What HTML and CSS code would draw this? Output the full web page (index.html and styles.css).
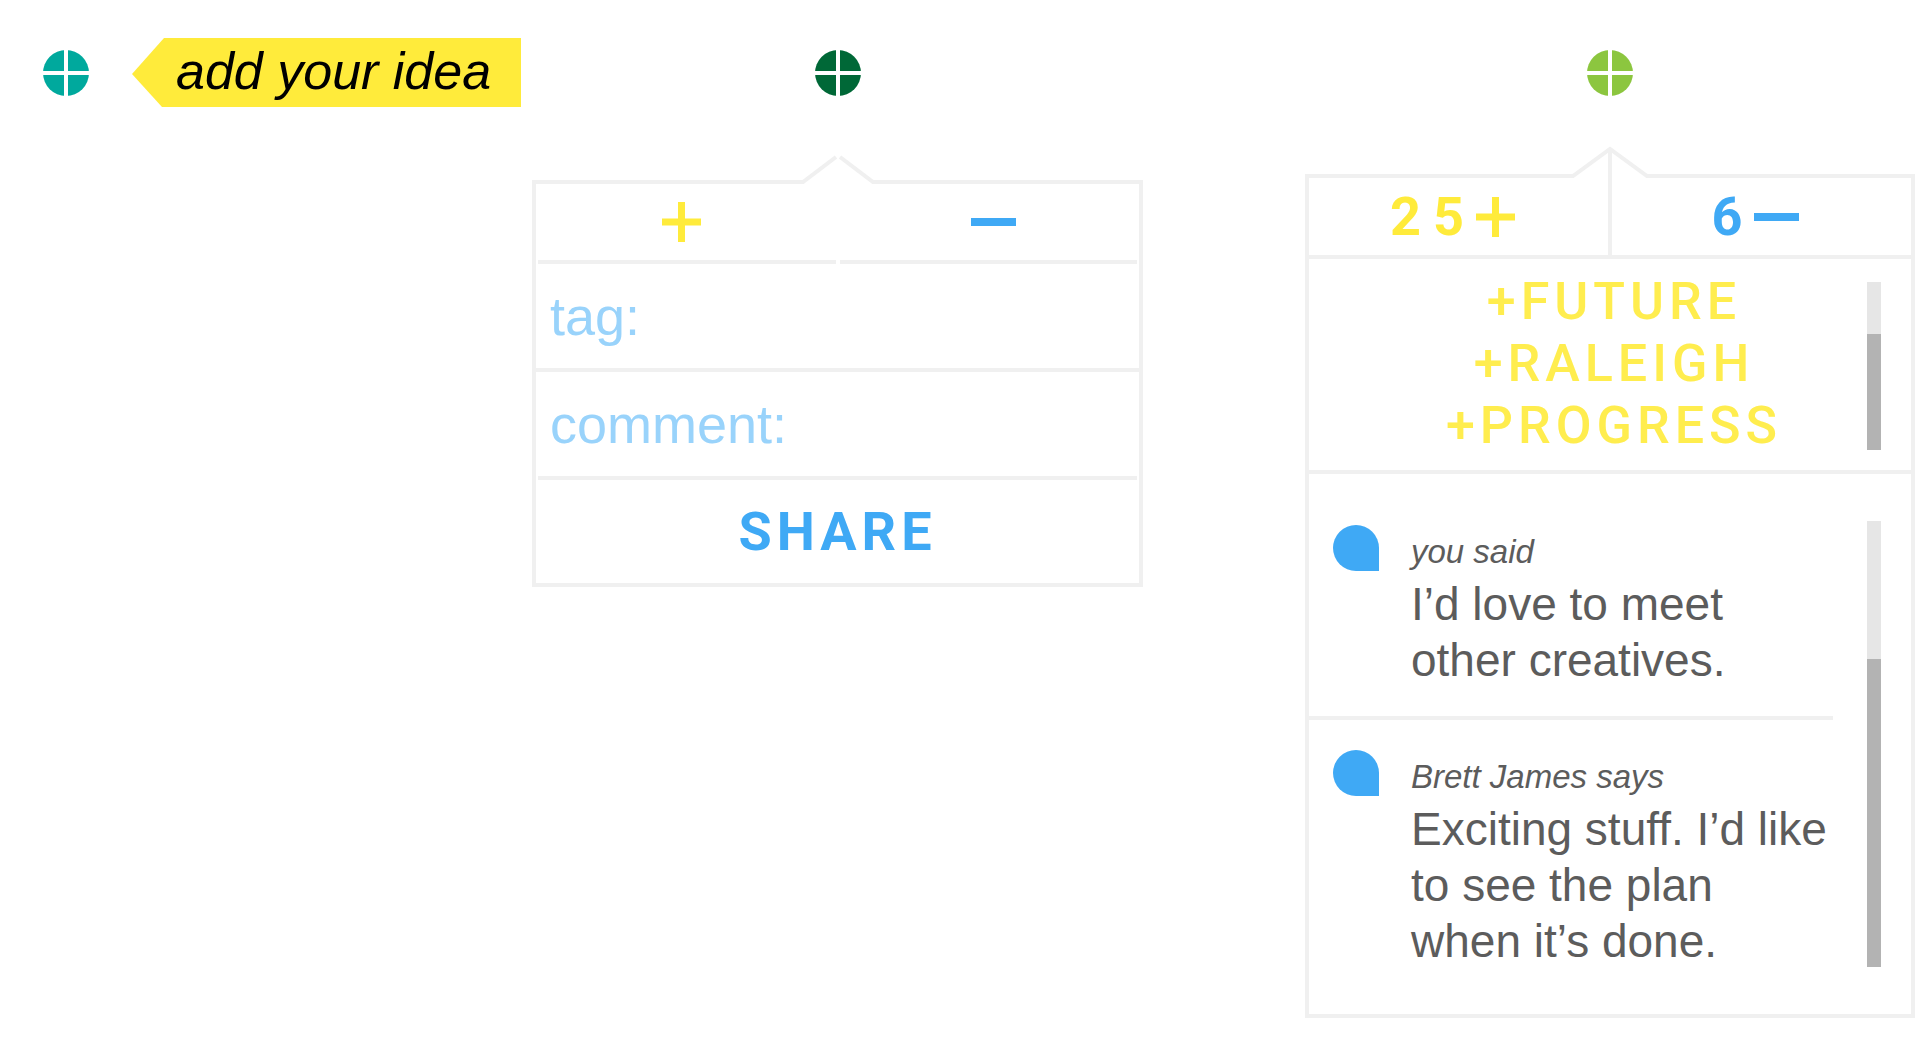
FILE: index.html
```html
<!DOCTYPE html>
<html lang="en">
<head>
    <meta charset="utf-8">
    <title>Add your idea</title>
    <link rel="stylesheet" href="styles.css">
</head>
<body>
    <main class="board">
        <section class="step step-add">
            <button class="marker teal" aria-label="Open marker">
                <svg viewBox="0 0 46 46"><circle cx="23" cy="23" r="23"/><path d="M23 0V46M0 23H46"/></svg>
            </button>
            <button class="idea-tag">add your idea</button>
        </section>

        <section class="step step-share">
            <div class="marker-row">
                <button class="marker green" aria-label="Open marker">
                    <svg viewBox="0 0 46 46"><circle cx="23" cy="23" r="23"/><path d="M23 0V46M0 23H46"/></svg>
                </button>
            </div>
            <form class="popup share-form">
                <div class="popup-top">
                    <span class="edge"></span>
                    <svg class="arrow" viewBox="0 0 80 32"><path d="M0 30H5L38 5M42 5L75 30H80"/></svg>
                    <span class="edge"></span>
                </div>
                <div class="popup-body">
                    <div class="votes">
                        <button type="button" class="vote vote-up" aria-label="Like">
                            <svg class="plus" viewBox="0 0 39 40"><path d="M19.5 0V40M0 20H39"/></svg>
                        </button>
                        <button type="button" class="vote vote-down" aria-label="Dislike">
                            <svg class="minus" viewBox="0 0 45 8"><path d="M0 4H45"/></svg>
                        </button>
                    </div>
                    <div class="field">
                        <label for="tag">tag:</label>
                        <input type="text" id="tag">
                    </div>
                    <hr>
                    <div class="field">
                        <label for="comment">comment:</label>
                        <input type="text" id="comment">
                    </div>
                    <hr class="inset">
                    <button type="submit" class="share">SHARE</button>
                </div>
            </form>
        </section>

        <section class="step step-result">
            <div class="marker-row">
                <button class="marker lime" aria-label="Open marker">
                    <svg viewBox="0 0 46 46"><circle cx="23" cy="23" r="23"/><path d="M23 0V46M0 23H46"/></svg>
                </button>
            </div>
            <div class="popup result">
                <div class="popup-top">
                    <span class="edge"></span>
                    <svg class="arrow" viewBox="0 0 80 32"><path d="M0 30H3L40 3L77 30H80M40 3V32"/></svg>
                    <span class="edge"></span>
                </div>
                <div class="popup-body">
                    <div class="votes">
                        <button class="vote vote-up">
                            <span>25</span>
                            <svg class="plus" viewBox="0 0 39 40"><path d="M19.5 0V40M0 20H39"/></svg>
                        </button>
                        <button class="vote vote-down">
                            <span>6</span>
                            <svg class="minus" viewBox="0 0 45 8"><path d="M0 4H45"/></svg>
                        </button>
                    </div>
                    <hr>
                    <div class="tags">
                        <ul>
                            <li>+FUTURE</li>
                            <li>+RALEIGH</li>
                            <li>+PROGRESS</li>
                        </ul>
                        <div class="scrollbar"><div class="thumb"></div></div>
                    </div>
                    <hr>
                    <div class="comments">
                        <div class="comment-list">
                            <article class="comment">
                                <div class="bubble"></div>
                                <div class="comment-text">
                                    <h2>you said</h2>
                                    <p>I’d love to meet other creatives.</p>
                                </div>
                            </article>
                            <article class="comment">
                                <div class="bubble"></div>
                                <div class="comment-text">
                                    <h2>Brett James says</h2>
                                    <p>Exciting stuff. I’d like to see the plan when it’s done.</p>
                                </div>
                            </article>
                        </div>
                        <div class="scrollbar"><div class="thumb"></div></div>
                    </div>
                </div>
            </div>
        </section>
    </main>
</body>
</html>
```
FILE: styles.css
```css
* {
    box-sizing: border-box;
}

body {
    margin: 0;
    background: #fff;
    font-family: "Liberation Sans", Arial, sans-serif;
    color: #5c5c5c;
}

button {
    border: none;
    padding: 0;
    background: none;
    font-family: inherit;
    cursor: pointer;
}

svg {
    display: block;
    fill: none;
}

hr {
    border: none;
    height: 4px;
    margin: 0;
    background: #f0f0f0;
}

hr.inset {
    margin: 0 2px;
}

.board {
    display: grid;
    grid-template-columns: 532fr 611fr 162fr 610fr;
    align-items: start;
    padding: 38px 5px 38px 0;
}

.step-result {
    grid-column: 4;
}

/* round markers */
.marker-row {
    display: flex;
    justify-content: center;
    align-items: center;
    height: 69px;
}

.marker {
    width: 46px;
    height: 46px;
    flex: none;
}

.marker path {
    stroke: #fff;
    stroke-width: 4;
}

.teal circle {
    fill: #00a99d;
}

.green circle {
    fill: #006837;
}

.lime circle {
    fill: #8cc63f;
}

.step-add {
    display: flex;
    align-items: center;
    gap: 43px;
    padding-left: 43px;
}

.idea-tag {
    height: 69px;
    padding: 0 30px 4px 44px;
    background: #ffeb3b;
    clip-path: polygon(32px 0, 100% 0, 100% 100%, 30px 100%, 0 52%);
    font-size: 52px;
    font-style: italic;
    white-space: nowrap;
    color: #000;
}

/* popups */
.share-form {
    margin-top: 45px;
}

.result {
    margin-top: 39px;
}

.popup-top {
    display: flex;
    align-items: flex-end;
}

.edge {
    flex: 1;
    height: 4px;
    background: #f0f0f0;
}

.arrow {
    width: 80px;
    height: 32px;
    stroke: #f0f0f0;
    stroke-width: 4;
}

.popup-body {
    border: 4px solid #f0f0f0;
    border-top: none;
}

.votes {
    display: grid;
    grid-template-columns: 1fr 1fr;
}

.vote {
    display: flex;
    justify-content: center;
    align-items: center;
    height: 77px;
    font-family: Roboto, sans-serif;
    font-size: 54px;
    font-weight: bold;
    letter-spacing: 12px;
}

.vote-up {
    color: #ffeb3b;
}

.vote-down {
    color: #3fa9f5;
}

.plus {
    width: 39px;
    height: 40px;
    stroke: currentColor;
    stroke-width: 7;
}

.minus {
    width: 45px;
    height: 8px;
    stroke: currentColor;
    stroke-width: 8;
}

.share-form .votes {
    gap: 4px;
    margin: 0 2px;
}

.share-form .vote {
    height: 80px;
    border-bottom: 4px solid #f0f0f0;
}

.share-form .vote-up {
    padding-right: 10px;
}

.share-form .vote-down {
    padding-left: 10px;
}

.result .votes {
    gap: 4px;
    background: #f0f0f0;
}

.result .vote {
    padding-right: 12px;
    background: #fff;
}

.field {
    display: flex;
    align-items: center;
    height: 104px;
    padding: 0 14px;
    font-size: 54px;
    color: #99d3fb;
}

.field input {
    width: 100%;
    min-width: 0;
    border: none;
    outline: none;
    background: none;
    font: inherit;
    color: #3fa9f5;
}

.share {
    display: block;
    width: 100%;
    height: 103px;
    font-family: Roboto, sans-serif;
    font-size: 54px;
    font-weight: bold;
    letter-spacing: 5px;
    color: #3fa9f5;
}

.tags {
    display: flex;
    padding: 12px 30px 13px 52px;
}

.tags ul {
    flex: 1;
    margin: 0;
    padding: 0;
    list-style: none;
    text-align: center;
    font-family: Roboto, sans-serif;
    font-size: 52px;
    font-weight: 500;
    line-height: 62px;
    letter-spacing: 5px;
    color: #ffed4e;
}

.scrollbar {
    display: flex;
    align-items: flex-end;
    width: 14px;
    flex: none;
    background: #e6e6e6;
}

.thumb {
    width: 100%;
    height: 69%;
    background: #b3b3b3;
}

.tags .scrollbar {
    margin: 11px 0 7px;
}

.comments {
    display: flex;
    gap: 34px;
    padding-right: 30px;
}

.comments .scrollbar {
    margin: 47px 0;
}

.comment-list {
    flex: 1;
    padding: 21px 0 17px;
}

.comment {
    display: flex;
    gap: 32px;
    padding: 30px 0 28px 24px;
}

.comment + .comment {
    border-top: 4px solid #f0f0f0;
}

.bubble {
    width: 46px;
    height: 46px;
    flex: none;
    border-radius: 50% 50% 0 50%;
    background: #3fa9f5;
}

.comment-text {
    padding-top: 3px;
}

.comment h2 {
    margin: 0;
    font-size: 33px;
    font-style: italic;
    font-weight: normal;
    line-height: 48px;
}

.comment p {
    margin: 0;
    font-size: 46px;
    line-height: 56px;
}
```
